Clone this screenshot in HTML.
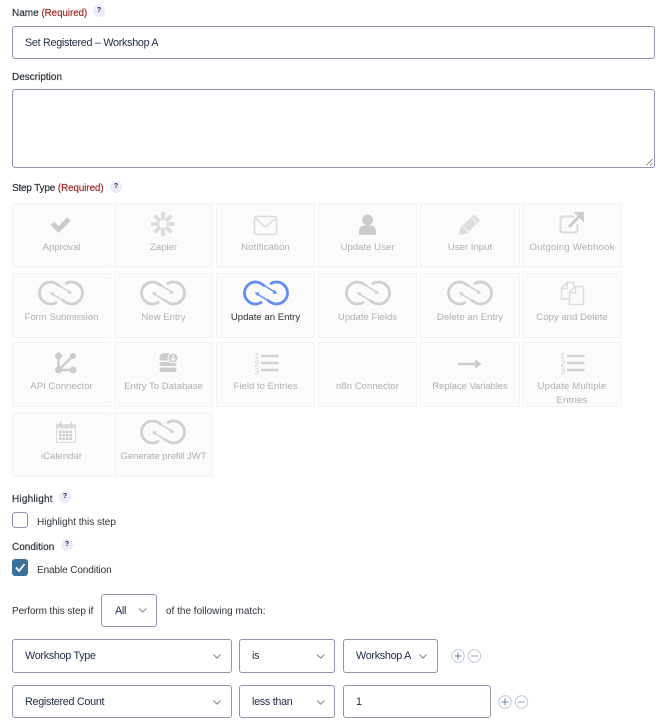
<!DOCTYPE html>
<html><head><meta charset="utf-8"><style>
html,body{margin:0;padding:0;background:#fff}
body{width:670px;height:726px;position:relative;overflow:hidden;font-family:"Liberation Sans",sans-serif;font-size:10.5px;color:#2c3338}
.a{position:absolute;white-space:nowrap;line-height:14px;height:14px}
.l{-webkit-text-stroke:.2px #2c3338;color:#2c3338;font-size:10px}
.r{color:#9b1c1c;font-size:9.7px;-webkit-text-stroke:.15px #9b1c1c}
.h{position:absolute;width:12px;height:12px;border-radius:50%;background:#ecebf8;color:#23235f;font-size:7px;font-weight:bold;line-height:12px;text-align:center}
.b{position:absolute;box-sizing:border-box;border:1px solid #9292b2;border-radius:3px;background:#fff}
.t{position:absolute;box-sizing:border-box;background:#fbfbfb;border:1px solid #f3f3f3;width:99px;height:65px}
.w{width:100px}
.t span{position:absolute;left:-4px;right:-4px;text-align:center;font-size:9.6px;line-height:14px;color:#b0b0b0;top:37px}
.v{font-size:10.8px;letter-spacing:-.3px;color:#1d2b4a}
svg.c{position:absolute;left:0;top:0}
</style></head><body>
<div class="a l" style="left:12px;top:7px">Name <span class="r">(Required)</span></div><div class="h" style="left:93px;top:5px">?</div>
<div class="b" style="left:12px;top:26px;width:643px;height:33px"></div>
<div class="a v" style="left:25px;top:36px">Set Registered – Workshop A</div>
<div class="a l" style="left:12px;top:71px">Description</div>
<div class="b" style="left:12px;top:89px;width:643px;height:79px"></div>
<div class="a l" style="left:12px;top:182px"><span style="letter-spacing:-.2px">Step Type</span> <span class="r">(Required)</span></div><div class="h" style="left:110px;top:181px">?</div>

<div class="t" style="left:12px;top:203px"><span>Approval</span></div>
<div class="t" style="left:114px;top:203px"><span>Zapier</span></div>
<div class="t" style="left:216px;top:203px"><span style="letter-spacing:.1px">Notification</span></div>
<div class="t" style="left:318px;top:203px"><span>Update User</span></div>
<div class="t w" style="left:420px;top:203px"><span>User Input</span></div>
<div class="t w" style="left:522px;top:203px"><span style="letter-spacing:.2px">Outgoing Webhook</span></div>
<div class="t" style="left:12px;top:273px"><span style="letter-spacing:-.05px">Form Submission</span></div>
<div class="t" style="left:114px;top:273px"><span>New Entry</span></div>
<div class="t" style="left:216px;top:273px"><span style="color:#333">Update an Entry</span></div>
<div class="t" style="left:318px;top:273px"><span>Update Fields</span></div>
<div class="t w" style="left:420px;top:273px"><span>Delete an Entry</span></div>
<div class="t w" style="left:522px;top:273px"><span>Copy and Delete</span></div>
<div class="t" style="left:12px;top:342px"><span>API Connector</span></div>
<div class="t" style="left:114px;top:342px"><span>Entry To Database</span></div>
<div class="t" style="left:216px;top:342px"><span>Field to Entries</span></div>
<div class="t" style="left:318px;top:342px"><span>n8n Connector</span></div>
<div class="t w" style="left:420px;top:342px"><span style="letter-spacing:-.1px">Replace Variables</span></div>
<div class="t w" style="left:522px;top:342px"><span style="letter-spacing:.15px">Update Multiple<br>Entries</span></div>
<div class="t" style="left:12px;top:412px"><span>iCalendar</span></div>
<div class="t" style="left:114px;top:412px"><span style="letter-spacing:-.1px">Generate prefill JWT</span></div>

<div class="a l" style="left:12px;top:493px;letter-spacing:.2px">Highlight</div><div class="h" style="left:59px;top:491px">?</div>
<div class="b" style="left:12px;top:512px;width:16px;height:16px"></div>
<div class="a" style="left:37px;top:516px;font-size:10px">Highlight this step</div>
<div class="a l" style="left:12px;top:541px">Condition</div><div class="h" style="left:61px;top:539px">?</div>
<div class="b" style="left:12px;top:559px;width:16px;height:17px;background:#3a7099;border-color:#3a7099"></div>
<div class="a" style="left:37px;top:564px;font-size:10px;letter-spacing:-.1px">Enable Condition</div>
<div class="a" style="left:12px;top:605px;font-size:10px;letter-spacing:-.1px">Perform this step if</div>
<div class="b" style="left:101px;top:594px;width:56px;height:33px"></div>
<div class="a v" style="left:115px;top:604px">All</div>
<div class="a" style="left:166px;top:605px;font-size:10px">of the following match:</div>

<div class="b" style="left:12px;top:639px;width:220px;height:34px"></div>
<div class="a v" style="left:25px;top:649px">Workshop Type</div>
<div class="b" style="left:239px;top:639px;width:96px;height:34px"></div>
<div class="a v" style="left:252px;top:649px">is</div>
<div class="b" style="left:343px;top:639px;width:95px;height:34px"></div>
<div class="a v" style="left:356px;top:649px">Workshop A</div>
<div class="b" style="left:12px;top:685px;width:220px;height:33px"></div>
<div class="a v" style="left:25px;top:695px">Registered Count</div>
<div class="b" style="left:239px;top:685px;width:96px;height:33px"></div>
<div class="a v" style="left:252px;top:695px">less than</div>
<div class="b" style="left:343px;top:685px;width:148px;height:33px"></div>
<div class="a v" style="left:356px;top:695px">1</div>

<svg class="c" width="670" height="726" viewBox="0 0 670 726" fill="none">
<defs>
<g id="lk" fill="none" stroke-linecap="round" stroke-linejoin="round">
<path stroke-width="2.800" d="M28 9.500C25 7.500 23 6 19.500 6A11 11 0 0 0 19.500 28C21.500 28 23.500 27.500 25 26.500"/>
<path stroke-width="2.800" d="M32 24.500C35 26.500 37 28 40.500 28A11 11 0 0 0 40.500 6C38.500 6 36.500 6.500 35 7.500"/>
<path stroke-width="1.400" d="M28 9.500L38 15.500M32 24.500L22 18.500"/>
<path stroke="none" fill="currentColor" d="M41.500 17.500L36.500 17.700L38.500 14ZM18.500 16.500L23.500 16.300L21.500 20Z"/>
</g>
<g id="ls"><text x="0" y="6.500" font-size="8.500" fill="#ccc" font-family="Liberation Sans">1</text><text x="0" y="14.500" font-size="8.500" fill="#ccc" font-family="Liberation Sans">2</text><text x="0" y="22.500" font-size="8.500" fill="#ccc" font-family="Liberation Sans">3</text><path stroke="#d2d2d2" stroke-width="2.600" d="M6.500 4H24M6.500 11H24M6.500 18H24"/></g>
</defs>
<!-- resize handle -->
<path stroke="#777" stroke-width=".8" d="M646 165.500L652.500 159M650 165.500L652.500 163"/>
<!-- approval -->
<path stroke="#ccc" stroke-width="5" d="M52.500 223.500L58.500 229.500L69 219"/>
<!-- zapier -->
<g stroke="#ddd" stroke-width="4"><path d="M163 212V236M151 224H175M154.500 215.500L171.500 232.500M171.500 215.500L154.500 232.500"/></g>
<circle cx="163" cy="224" r="4" fill="#fbfbfb"/>
<!-- notification -->
<rect x="254.500" y="216.500" width="22" height="18" rx="2" stroke="#ddd" stroke-width="1.600"/>
<path stroke="#ddd" stroke-width="1.500" d="M255 218L265.500 227L276 218"/>
<!-- user -->
<circle cx="367.500" cy="220" r="5.500" fill="#ccc"/>
<path fill="#ccc" d="M359 235V231C359 227 362 225.500 365 225.500H370C373 225.500 376 227 376 231V235Z"/>
<!-- pencil -->
<path fill="#ddd" d="M459 235L461 227L474 214.500L480 220.500L467 233.500Z"/>
<path stroke="#fbfbfb" stroke-width="1" d="M463 226.500L468 231.500M471.500 217L477 222.500"/>
<!-- outgoing -->
<path stroke="#ddd" stroke-width="2" d="M574 216.500H563.500Q560.500 216.500 560.500 219.500V229.500Q560.500 232.500 563.500 232.500H574.500Q577.500 232.500 577.500 229.500V224"/>
<path stroke="#ccc" stroke-width="3" d="M569 227L580 215.500"/>
<path fill="#ccc" d="M573.500 212H584V222.500Z"/>
<!-- links -->
<use href="#lk" x="31" y="276" color="#d0d0d0" stroke="#d0d0d0"/>
<use href="#lk" x="133" y="276" color="#d0d0d0" stroke="#d0d0d0"/>
<use href="#lk" x="236" y="276" color="#648cf5" stroke="#648cf5"/>
<use href="#lk" x="338" y="276" color="#d0d0d0" stroke="#d0d0d0"/>
<use href="#lk" x="440" y="276" color="#d0d0d0" stroke="#d0d0d0"/>
<use href="#lk" x="133" y="415" color="#d0d0d0" stroke="#d0d0d0"/>
<!-- copy -->
<path stroke="#ddd" stroke-width="1.500" d="M569 299H561.500V288L567 282.500H574V287M561.500 288.500H567V283"/>
<path stroke="#ddd" stroke-width="1.500" fill="#fbfbfb" d="M569.500 292L575 286.500H583.500V304.500H569.500ZM570 292.500H575.500V287"/>
<!-- api -->
<path stroke="#ccc" stroke-width="2.500" d="M58.500 356V370H73M58.500 370L73 356"/>
<g fill="#ccc"><circle cx="58.500" cy="356" r="3.500"/><circle cx="73" cy="356" r="3"/><circle cx="58.500" cy="370" r="3.500"/><circle cx="73" cy="370" r="3.500"/></g>
<!-- db -->
<g fill="#ccc"><ellipse cx="166.500" cy="355.500" rx="7" ry="2.500"/><rect x="159.500" y="357" width="11" height="3.500" rx="1.500"/><rect x="159.500" y="362" width="17" height="4" rx="2"/><rect x="159.500" y="367.500" width="17" height="4.500" rx="2.200"/></g>
<circle cx="173" cy="358" r="5" fill="#ccc" stroke="#fbfbfb"/>
<path stroke="#fbfbfb" stroke-width="1.300" d="M173 355V360M171 358.500L173 360.500L175 358.500"/>
<!-- lists -->
<use href="#ls" x="254.500" y="352"/>
<use href="#ls" x="560.500" y="352"/>
<!-- arrow -->
<path stroke="#ccc" stroke-width="2.600" d="M458 364H476"/><path fill="#ccc" d="M475 359L481.500 364L475 369Z"/>
<!-- calendar -->
<rect x="56" y="424" width="20" height="19" fill="#ddd"/>
<rect x="57" y="428.500" width="18" height="13.500" fill="#fbfbfb"/>
<path stroke="#ccc" stroke-width="1.300" d="M60.500 422V425.500M71.500 422V425.500"/>
<g fill="#ccc"><rect x="59" y="430.500" width="2.500" height="2.500"/><rect x="62.500" y="430.500" width="2.500" height="2.500"/><rect x="66" y="430.500" width="2.500" height="2.500"/><rect x="69.500" y="430.500" width="2.500" height="2.500"/><rect x="59" y="434" width="2.500" height="2.500"/><rect x="62.500" y="434" width="2.500" height="2.500"/><rect x="66" y="434" width="2.500" height="2.500"/><rect x="69.500" y="434" width="2.500" height="2.500"/><rect x="59" y="437.500" width="2.500" height="2.500"/><rect x="62.500" y="437.500" width="2.500" height="2.500"/><rect x="66" y="437.500" width="2.500" height="2.500"/><rect x="69.500" y="437.500" width="2.500" height="2.500"/></g>
<!-- checkbox tick -->
<path stroke="#fff" stroke-width="1.800" d="M16 567.500L19 571L24.500 564"/>
<!-- chevrons -->
<g stroke="#8b8ba3" stroke-width="1.200">
<path d="M139 608.500L142.700 612L146.400 608.500"/>
<path d="M213.500 654.500L217 658L220.500 654.500"/>
<path d="M317 654.500L320.700 658L324.400 654.500"/>
<path d="M419.500 654.500L423 658L426.500 654.500"/>
<path d="M213.500 700.500L217 704L220.500 700.500"/>
<path d="M317 700.500L320.700 704L324.400 700.500"/>
</g>
<!-- plus minus -->
<g stroke="#c0c6dc" stroke-width="1" fill="#fff">
<circle cx="458" cy="656" r="6.200"/><circle cx="474.500" cy="656" r="6.200"/>
<circle cx="505" cy="702" r="6.200"/><circle cx="521.500" cy="702" r="6.200"/>
</g>
<g stroke="#5f83a8" stroke-width="1">
<path d="M454.500 656H461.500M458 652.500V659.500"/>
<path d="M501.500 702H508.500M505 698.500V705.500"/>
</g>
<g stroke="#8fa3bb" stroke-width="1"><path d="M471 656H478M518 702H525"/></g>
</svg>
</body></html>
